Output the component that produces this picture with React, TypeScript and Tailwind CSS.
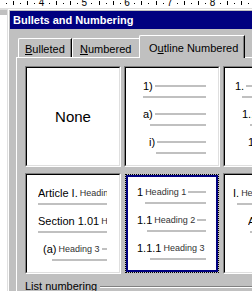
import React from 'react';

const FONT = "font-['Liberation_Sans',Arial,sans-serif]";

function Ruler() {
  const nums = [4, 5, 6, 7, 8];
  const marks: { x: number; tick: boolean }[] = [];
  for (let k = -1; k < 5; k++) {
    const base = 41.5 + k * 42.75;
    for (let j = 1; j < 6; j++) {
      marks.push({ x: Math.round(base + (j * 42.75) / 6), tick: j % 2 === 0 });
    }
  }
  return (
    <svg width="252" height="8" className="block">
      <rect width="252" height="8" fill="#ffffff" />
      {marks.map((m, i) =>
        m.tick ? (
          <rect key={i} x={m.x} y={1} width={1} height={4} fill="#000" />
        ) : (
          <rect key={i} x={m.x} y={3} width={1} height={1} fill="#000" />
        )
      )}
      {nums.map((n, i) => (
        <text
          key={n}
          x={41.5 + i * 42.75}
          y={6}
          fontSize="10"
          textAnchor="middle"
          fontFamily="Liberation Sans, Arial, sans-serif"
          fill="#000"
        >
          {n}
        </text>
      ))}
    </svg>
  );
}

// one level of the outline preview: label row + rule below it
function Level({
  ml,
  label,
  sub,
  lineMl,
  mr = 12,
}: {
  ml: number;
  label: string;
  sub?: string;
  lineMl: number;
  mr?: number;
}) {
  return (
    <div className="h-[28px]" style={{ marginRight: mr }}>
      <div className="h-[12px] flex items-center overflow-hidden whitespace-nowrap" style={{ marginLeft: ml }}>
        <span className="text-[11px] leading-[12px] text-black">{label}</span>
        {sub && <span className="ml-[2px] text-[9px] leading-[12px] text-[#333333]">{sub}</span>}
        <div className="flex-1 min-w-[2px] h-[2px] ml-[2px] bg-[#c0c0c0]" />
      </div>
      <div className="mt-[4px] h-[2px] bg-[#c0c0c0]" style={{ marginLeft: lineMl }} />
    </div>
  );
}

function Box({
  children,
  selected = false,
  bare = false,
}: {
  children?: React.ReactNode;
  selected?: boolean;
  bare?: boolean;
}) {
  if (selected) {
    return (
      <div className="w-[96px] h-[101px] p-[1px] shrink-0">
        <div className="h-full border border-dotted border-black">
          <div className="h-full border-2 border-[#000080] bg-white overflow-hidden pt-[9px]">{children}</div>
        </div>
      </div>
    );
  }
  return (
    <div className="w-[96px] h-[101px] shrink-0 border border-t-[#808080] border-l-[#808080] border-b-white border-r-white">
      <div
        className={`h-full border border-t-black border-l-black border-b-[#dfdfdf] border-r-[#dfdfdf] bg-white overflow-hidden ${
          bare ? 'flex items-center justify-center' : 'pt-[12px]'
        }`}
      >
        {children}
      </div>
    </div>
  );
}

export default function App() {
  return (
    <div className={`w-[252px] h-[291px] overflow-hidden bg-white ${FONT}`}>
      <Ruler />
      <div className="flex">
        <div className="w-[7px] shrink-0">
          <div className="h-[2px] bg-[#dfdfdf]" />
          <div className="h-[5px] bg-[#c0c0c0]" />
        </div>
        {/* dialog */}
        <div className="w-[300px] shrink-0 border-l border-t border-[#dfdfdf]">
          <div className="border-l border-t border-white bg-[#c0c0c0] p-[1px] h-[290px]">
            <div className="h-[18px] bg-[#000080] pl-[3px] pt-[1px] text-white text-[11px] font-bold leading-[16px]">
              Bullets and Numbering
            </div>
            <div className="pt-[6px] pl-[6px]">
              {/* tabs */}
              <div className="flex items-end h-[22px] pl-[2px] text-[11px] leading-[13px] text-black">
                <div className="w-[54px] h-[19px] border-l border-t border-white rounded-tl-[2px] border-r border-r-black shadow-[inset_-1px_0_0_#808080] pl-[6px] pt-[4px]">
                  <span className="underline underline-offset-[1px]">B</span>ulleted
                </div>
                <div className="w-[69px] h-[19px] border-l border-t border-white rounded-tl-[2px] pl-[7px] pt-[4px]">
                  <span className="underline underline-offset-[1px]">N</span>umbered
                </div>
                <div className="relative z-10 -ml-[2px] -mb-[1px] w-[106px] h-[23px] bg-[#c0c0c0] border-l border-t border-white rounded-tl-[2px] border-r border-r-black shadow-[inset_-1px_0_0_#808080] pl-[9px] pt-[6px]">
                  O<span className="underline underline-offset-[1px]">u</span>tline Numbered
                </div>
              </div>
              {/* panel */}
              <div className="border-l border-t border-white pl-[8px] pt-[8px] h-[240px]">
                <div className="grid grid-cols-[96px_96px_96px] gap-x-[3px] gap-y-[6px]">
                  <Box bare>
                    <span className="text-[15px] leading-[18px] text-black">None</span>
                  </Box>
                  <Box>
                    <Level ml={17} label="1)" lineMl={17} />
                    <Level ml={17} label="a)" lineMl={24} />
                    <Level ml={23} label="i)" lineMl={30} />
                  </Box>
                  <Box>
                    <Level ml={10} label="1." lineMl={17} />
                    <Level ml={17} label="1.1" lineMl={25} />
                    <Level ml={23} label="1.1.1" lineMl={30} />
                  </Box>
                  <Box>
                    <Level ml={11} label="Article I." sub="Heading 1" lineMl={11} />
                    <Level ml={11} label="Section 1.01" sub="Heading 2" lineMl={11} />
                    <Level ml={16} label="(a)" sub="Heading 3" lineMl={25} />
                  </Box>
                  <Box selected>
                    <Level ml={9} label="1" sub="Heading 1" lineMl={17} mr={10} />
                    <Level ml={9} label="1.1" sub="Heading 2" lineMl={19} mr={10} />
                    <Level ml={9} label="1.1.1" sub="Heading 3" lineMl={22} mr={10} />
                  </Box>
                  <Box>
                    <Level ml={8} label="I." sub="Heading 1" lineMl={12} />
                    <Level ml={23} label="A." sub="Heading 2" lineMl={25} />
                    <Level ml={30} label="1." sub="Heading 3" lineMl={30} />
                  </Box>
                </div>
                <div className="flex items-center mt-[6px] text-[11px] leading-[13px] text-black">
                  <span>List numbering</span>
                  <div className="flex-1 ml-[3px] mr-[-60px] border-t border-[#808080] border-b border-b-white" />
                </div>
              </div>
            </div>
          </div>
        </div>
      </div>
    </div>
  );
}
